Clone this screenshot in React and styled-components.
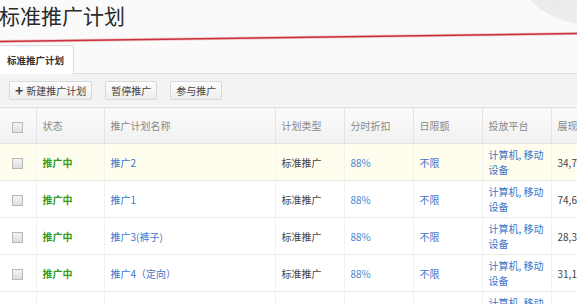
import styled, { createGlobalStyle } from "styled-components";

const GlobalStyle = createGlobalStyle`
  html, body {
    margin: 0;
    padding: 0;
    background: #fafafa;
    overflow: hidden;
  }
  body {
    font-family: "Noto Sans CJK SC", "Liberation Sans", sans-serif;
    font-size: 10px;
    color: #333;
  }
`;

const rows = [
  { name: "推广2", show: "34,712", highlight: true },
  { name: "推广1", show: "74,608" },
  { name: "推广3(裤子)", show: "28,356" },
  { name: "推广4（定向）", show: "31,120" },
  { name: "推广5", show: "12,874" },
];

const columns = [
  { label: "", width: 36 },
  { label: "状态", width: 68 },
  { label: "推广计划名称", width: 171 },
  { label: "计划类型", width: 69 },
  { label: "分时折扣", width: 69 },
  { label: "日限额", width: 69 },
  { label: "投放平台", width: 69 },
  { label: "展现", width: 80 },
  { label: "点击", width: 80 },
];

const Checkbox = () => <Box />;

const App = () => {
  return (
    <Page>
      <GlobalStyle />
      <Header>
        <Decor width="577" height="45" viewBox="0 0 577 45">
          <defs>
            <radialGradient id="blob" cx="0.3" cy="0.7" r="0.8">
              <stop offset="0" stopColor="#e9e9e9" />
              <stop offset="1" stopColor="#f3f3f3" />
            </radialGradient>
          </defs>
          <circle cx="590" cy="-60" r="85" fill="url(#blob)" />
          <line x1="0" y1="41.5" x2="577" y2="33.5" stroke="#f3c6c6" strokeWidth="3" />
          <line x1="0" y1="41.5" x2="577" y2="33.5" stroke="#c7323b" strokeWidth="1.4" />
        </Decor>
        <Title>标准推广计划</Title>
      </Header>

      <TabBar>
        <Tab>标准推广计划</Tab>
      </TabBar>

      <Toolbar>
        <Button>
          <Plus>+</Plus>新建推广计划
        </Button>
        <Button>暂停推广</Button>
        <Button>参与推广</Button>
      </Toolbar>

      <Table>
        <colgroup>
          {columns.map((c, i) => (
            <col key={i} style={{ width: c.width }} />
          ))}
        </colgroup>
        <thead>
          <tr>
            {columns.map((c, i) => (
              <Th key={i} $center={i === 0}>
                {i === 0 ? <Checkbox /> : c.label}
              </Th>
            ))}
          </tr>
        </thead>
        <tbody>
          {rows.map((r) => (
            <Row key={r.name} $highlight={r.highlight}>
              <Td $center>
                <Checkbox />
              </Td>
              <Td>
                <Status>推广中</Status>
              </Td>
              <Td>
                <Link>{r.name}</Link>
              </Td>
              <Td>标准推广</Td>
              <Td>
                <Percent>88%</Percent>
              </Td>
              <Td>
                <Link>不限</Link>
              </Td>
              <Td>
                <Platform>
                  计算机, 移动
                  <br />
                  设备
                </Platform>
              </Td>
              <Td>{r.show}</Td>
              <Td>1,024</Td>
            </Row>
          ))}
        </tbody>
      </Table>
    </Page>
  );
};

export default App;

const Page = styled.div`
  width: 577px;
  height: 304px;
  overflow: hidden;
  background: #fafafa;
`;

const Header = styled.div`
  position: relative;
  height: 45px;
`;

const Decor = styled.svg`
  position: absolute;
  left: 0;
  top: 0;
`;

const Title = styled.h1`
  position: relative;
  margin: 0 0 0 -1px;
  padding-top: 2px;
  font-size: 21px;
  line-height: 26px;
  font-weight: 400;
  color: #2a2a2a;
`;

const TabBar = styled.div`
  display: flex;
  height: 28px;
  border-bottom: 1px solid #dcdcdc;
`;

const Tab = styled.div`
  width: 66px;
  padding-left: 7px;
  display: flex;
  align-items: center;
  background: #fff;
  border: 1px solid #dcdcdc;
  border-left: none;
  border-bottom: none;
  border-radius: 0 2px 0 0;
  font-size: 9.5px;
  font-weight: 700;
  color: #333;
  margin-bottom: -1px;
`;

const Toolbar = styled.div`
  display: flex;
  align-items: center;
  gap: 13px;
  height: 32px;
  padding-left: 9px;
  background: #f3f3f3;
`;

const Button = styled.div`
  display: flex;
  align-items: center;
  height: 17px;
  padding: 0 5px;
  background: linear-gradient(#fdfdfd, #eeeeee);
  border: 1px solid #d8d8d8;
  border-radius: 2px;
  font-size: 10px;
  color: #444;
  white-space: nowrap;
`;

const Plus = styled.span`
  font-size: 14px;
  font-weight: 700;
  line-height: 1;
  margin-right: 3px;
  color: #444;
`;

const Table = styled.table`
  table-layout: fixed;
  width: 711px;
  border-collapse: collapse;
  margin-top: 1px;
`;

const Th = styled.th`
  height: 35px;
  padding: 0 6px;
  text-align: ${(p) => (p.$center ? "center" : "left")};
  font-weight: 400;
  font-size: 10px;
  color: #888;
  background: linear-gradient(#fbfbfb, #f1f1f1);
  border-top: 1px solid #e2e2e2;
  border-bottom: 1px solid #e2e2e2;
  border-left: 1px solid #e4e4e4;
  &:first-child {
    border-left: none;
  }
  white-space: nowrap;
  overflow: hidden;
`;

const Row = styled.tr`
  background: ${(p) => (p.$highlight ? "#fffded" : "#fff")};
`;

const Td = styled.td`
  height: 36px;
  padding: 0 6px;
  text-align: ${(p) => (p.$center ? "center" : "left")};
  font-size: 10px;
  color: #444;
  border-bottom: 1px solid #ececec;
  border-left: 1px solid #f2f2f2;
  &:first-child {
    border-left: none;
  }
  white-space: nowrap;
  overflow: hidden;
`;

const Box = styled.span`
  display: inline-block;
  vertical-align: middle;
  width: 9px;
  height: 9px;
  border: 1px solid #b8b8b8;
  background: linear-gradient(#f4f4f4, #dedede);
`;

const Status = styled.span`
  color: #3a9a18;
  font-weight: 700;
`;

const Link = styled.span`
  color: #3c74c8;
`;

const Percent = styled.span`
  color: #4a88d4;
`;

const Platform = styled.span`
  display: inline-block;
  line-height: 15px;
  color: #3c74c8;
`;
